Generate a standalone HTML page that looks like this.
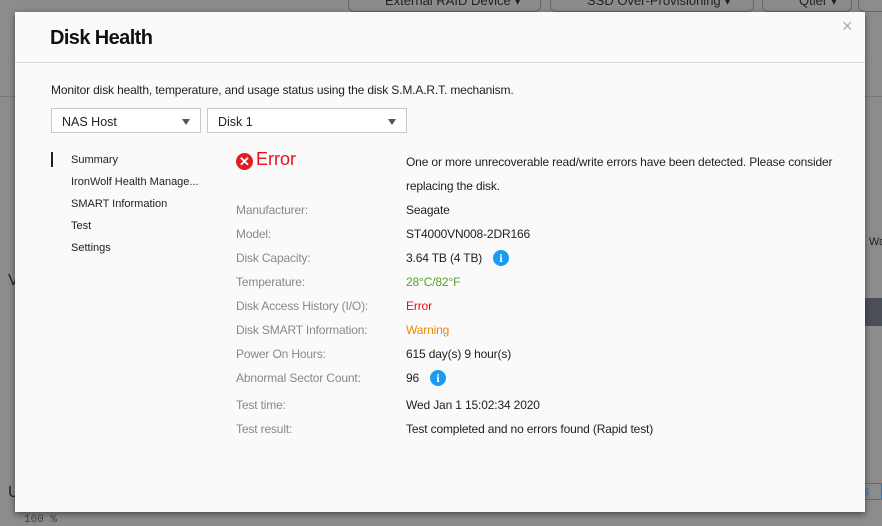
<!DOCTYPE html>
<html><head><style>
*{margin:0;padding:0;box-sizing:border-box}
body{width:882px;height:525px;overflow:hidden;background:#8c8c8c;font-family:"Liberation Sans",sans-serif;position:relative;color:#222}
.a{position:absolute;white-space:nowrap}
.dlg{position:absolute;left:15px;top:12px;width:850px;height:500px;background:#fafafa;box-shadow:0 2px 6px rgba(0,0,0,.5)}
.sel{position:absolute;height:25px;border:1px solid #c8c8c8;background:#fff;font-size:12.5px;padding:6px 0 0 10px}
.sel:after{content:"";position:absolute;right:10px;top:10px;border-left:4px solid transparent;border-right:4px solid transparent;border-top:6px solid #555}
.l{font-size:12px;color:#888;letter-spacing:-.15px}
.v{font-size:12px;color:#222;letter-spacing:-.15px}
.n{font-size:11px;color:#222;left:71px}
.info{display:inline-block;width:16px;height:16px;border-radius:50%;background:#1a9af0;color:#fff;font-weight:bold;font-size:12px;text-align:center;line-height:16px;font-family:"Liberation Serif",serif}
</style></head><body>
<div class="a" style="left:348px;top:-8px;width:193px;height:20px;border:1px solid #666;border-radius:6px;font-size:13px;color:#222;padding:0 0 0 36px">External RAID Device ▾</div>
<div class="a" style="left:550px;top:-8px;width:204px;height:20px;border:1px solid #666;border-radius:6px;font-size:13px;color:#222;padding:0 0 0 36px">SSD Over-Provisioning ▾</div>
<div class="a" style="left:762px;top:-8px;width:90px;height:20px;border:1px solid #666;border-radius:6px;font-size:13px;color:#222;padding:0 0 0 36px">Qtier ▾</div>
<div class="a" style="left:858px;top:-8px;width:30px;height:20px;border:1px solid #666;border-radius:6px"></div>
<div class="a" style="left:0;top:96px;width:882px;height:1px;background:#777"></div>
<div class="a" style="left:860px;top:298px;width:22px;height:28px;background:#4a4f58"></div>
<div class="a" style="left:860px;top:483px;width:22px;height:17px;border:1px solid #3a6fc0;color:#3a6fc0;font-size:12px">ls</div>
<div class="a" style="left:869px;top:236px;font-size:11px">Wa</div>
<div class="a" style="left:8px;top:272px;font-size:16px">V</div>
<div class="a" style="left:8px;top:484px;font-size:16px">U</div>
<div class="a" style="left:24px;top:514px;font-size:11px;color:#444;font-family:'Liberation Mono',monospace">100 %</div>
<div class="dlg">
<div class="a" style="left:35px;top:15px;font-size:20px;font-weight:bold;color:#111;letter-spacing:-.6px">Disk Health</div>
<div class="a" style="left:827px;top:4px;font-size:18px;color:#aaa">×</div>
<div class="a" style="left:0;top:50px;width:850px;height:1px;background:#ddd"></div>
<div class="a v" style="left:36px;top:71px">Monitor disk health, temperature, and usage status using the disk S.M.A.R.T. mechanism.</div>
<div class="sel" style="left:36px;top:96px;width:150px">NAS Host</div>
<div class="sel" style="left:192px;top:96px;width:200px">Disk 1</div>
<div class="a" style="left:36px;top:140px;width:2px;height:15px;background:#222"></div>
<div class="a n" style="left:56px;top:142px">Summary</div>
<div class="a n" style="left:56px;top:164px">IronWolf Health Manage...</div>
<div class="a n" style="left:56px;top:186px">SMART Information</div>
<div class="a n" style="left:56px;top:208px">Test</div>
<div class="a n" style="left:56px;top:230px">Settings</div>
<div class="a" style="left:221px;top:141px;width:17px;height:17px;border-radius:50%;background:#e02020;color:#fff;font-size:13px;font-weight:bold;text-align:center;line-height:17px">✕</div>
<div class="a" style="left:241px;top:137px;font-size:18px;color:#e8101e">Error</div>
<div class="a v" style="left:391px;top:143px">One or more unrecoverable read/write errors have been detected. Please consider</div>
<div class="a v" style="left:391px;top:167px">replacing the disk.</div>
<div class="a l" style="left:221px;top:191px">Manufacturer:</div><div class="a v" style="left:391px;top:191px">Seagate</div>
<div class="a l" style="left:221px;top:215px">Model:</div><div class="a v" style="left:391px;top:215px">ST4000VN008-2DR166</div>
<div class="a l" style="left:221px;top:239px">Disk Capacity:</div><div class="a v" style="left:391px;top:239px">3.64 TB (4 TB)</div>
<div class="a" style="left:478px;top:237px"><span class="info">i</span></div>
<div class="a l" style="left:221px;top:263px">Temperature:</div><div class="a v" style="left:391px;top:263px;color:#5aa02c">28°C/82°F</div>
<div class="a l" style="left:221px;top:287px">Disk Access History (I/O):</div><div class="a v" style="left:391px;top:287px;color:#e0101e">Error</div>
<div class="a l" style="left:221px;top:311px">Disk SMART Information:</div><div class="a v" style="left:391px;top:311px;color:#f08a00">Warning</div>
<div class="a l" style="left:221px;top:335px">Power On Hours:</div><div class="a v" style="left:391px;top:335px">615 day(s) 9 hour(s)</div>
<div class="a l" style="left:221px;top:359px">Abnormal Sector Count:</div><div class="a v" style="left:391px;top:359px">96</div>
<div class="a" style="left:415px;top:357px"><span class="info">i</span></div>
<div class="a l" style="left:221px;top:386px">Test time:</div><div class="a v" style="left:391px;top:386px">Wed Jan 1 15:02:34 2020</div>
<div class="a l" style="left:221px;top:410px">Test result:</div><div class="a v" style="left:391px;top:410px">Test completed and no errors found (Rapid test)</div>
</div>
</body></html>
